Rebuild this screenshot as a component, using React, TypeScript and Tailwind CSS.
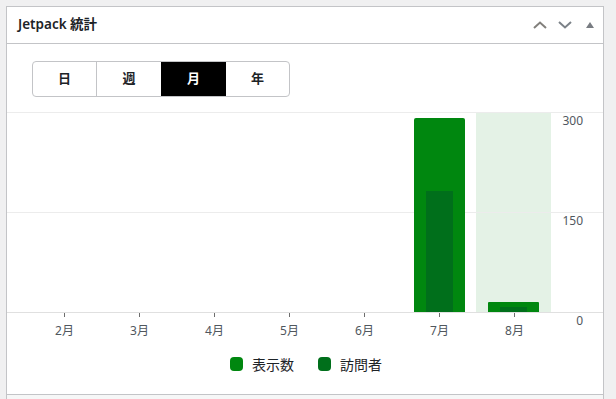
import React from "react";

const months = ["2月", "3月", "4月", "5月", "6月", "7月", "8月"];

function Chart() {
  return (
    <svg width="596" height="245" viewBox="0 0 596 245" className="block">
      <rect x="469" y="12" width="75" height="200" fill="#e4f2e6" />
      <line x1="0" y1="12.5" x2="596" y2="12.5" stroke="#ececec" strokeWidth="1" />
      <line x1="0" y1="112.5" x2="596" y2="112.5" stroke="#ececec" strokeWidth="1" />
      <path d="M407 212 V20 a2 2 0 0 1 2 -2 H456 a2 2 0 0 1 2 2 V212 Z" fill="#00870f" />
      <rect x="419" y="91" width="27" height="121" fill="#006f1b" />
      <path d="M481 212 V203 a1 1 0 0 1 1 -1 H531 a1 1 0 0 1 1 1 V212 Z" fill="#00870f" />
      <rect x="493" y="207" width="27" height="5" fill="#006f1b" />
      <line x1="0" y1="212.5" x2="596" y2="212.5" stroke="#e0e0e0" strokeWidth="1" />
      {months.map((m, i) => (
        <g key={m}>
          <line x1={57.5 + 75 * i} y1="213" x2={57.5 + 75 * i} y2="217" stroke="#6d6d6d" strokeWidth="1" />
          <text
            x={57.5 + 75 * i}
            y="235"
            textAnchor="middle"
            fontSize="12"
            fill="#50575e"
            fontFamily='"Noto Sans", "Noto Sans CJK JP", sans-serif'
          >
            {m}
          </text>
        </g>
      ))}
      {[
        ["300", 25],
        ["150", 125],
        ["0", 225],
      ].map(([t, y]) => (
        <text
          key={t as string}
          x="576"
          y={y as number}
          textAnchor="end"
          fontSize="12"
          fill="#50575e"
          fontFamily='"Noto Sans", sans-serif'
        >
          {t}
        </text>
      ))}
    </svg>
  );
}

export default function App() {
  const tabs = ["日", "週", "月", "年"];
  return (
    <div
      className="w-[616px] h-[399px] bg-[#f0f0f1] pt-[6px] pl-[6px] overflow-hidden"
      style={{ fontFamily: '"Noto Sans", "Noto Sans CJK JP", sans-serif' }}
    >
      <div className="w-[598px] h-[400px] bg-white border border-[#c3c4c7] flex flex-col">
        <div className="h-[37px] border-b border-[#c3c4c7] flex items-center pl-[11px] pr-[8px]">
          <div className="text-[13.5px] font-semibold text-[#1d2327] flex-1 leading-none">Jetpack 統計</div>
          <div className="flex items-center">
            <svg width="14" height="8" viewBox="0 0 14 8" className="mr-[11px]">
              <path d="M1 7 L7 1.5 L13 7" fill="none" stroke="#82807c" strokeWidth="2" />
            </svg>
            <svg width="14" height="8" viewBox="0 0 14 8" className="mr-[14px]">
              <path d="M1 1 L7 6.5 L13 1" fill="none" stroke="#7c8288" strokeWidth="2" />
            </svg>
            <svg width="8" height="6" viewBox="0 0 8 6" className="mr-[1px]">
              <path d="M0 6 L4 0 L8 6 Z" fill="#787c82" />
            </svg>
          </div>
        </div>
        <div className="pt-[17px] pl-[25px]">
          <div className="flex w-[258px] h-[36px] border border-[#c3c4c7] rounded-[4px] overflow-hidden">
            {tabs.map((t, i) => (
              <div
                key={t}
                className={
                  i === 2
                    ? "w-[65px] flex items-center justify-center bg-black text-white text-[13px] font-bold"
                    : i === 0
                    ? "w-[64px] flex items-center justify-center border-r border-[#c3c4c7] text-[#1d2327] text-[13px] font-bold"
                    : i === 1
                    ? "w-[64px] flex items-center justify-center text-[#1d2327] text-[13px] font-bold"
                    : "flex-1 flex items-center justify-center text-[#1d2327] text-[13px] font-bold"
                }
              >
                {t}
              </div>
            ))}
          </div>
        </div>
        <div className="mt-[3px]">
          <Chart />
        </div>
        <div className="flex items-center justify-center h-[38px] pl-[2px] text-[14px] text-[#1d2327]">
          <div className="w-[13px] h-[14px] rounded-[4px] bg-[#00870f] mr-[9px]" />
          <span className="mr-[24px]">表示数</span>
          <div className="w-[13px] h-[14px] rounded-[4px] bg-[#006f1b] mr-[9px]" />
          <span>訪問者</span>
        </div>
        <div className="mt-[11px] border-t border-[#c3c4c7] bg-[#f6f7f7] flex-1" />
      </div>
    </div>
  );
}
